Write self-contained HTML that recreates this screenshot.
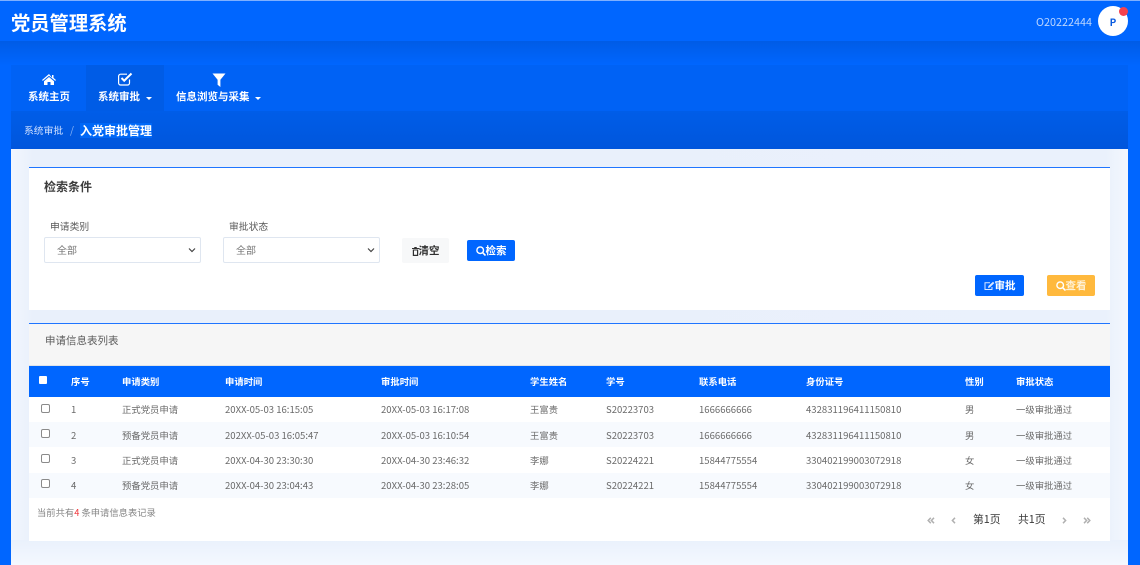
<!DOCTYPE html>
<html lang="zh-CN"><head><meta charset="utf-8"><title>党员管理系统</title>
<style>
*{box-sizing:border-box}
html{background:#0066ff}
html,body{margin:0;padding:0;width:1140px;height:565px;overflow:hidden;font-family:"Noto Sans CJK SC","Liberation Sans",sans-serif;color:#6c757d}
body{background:#0066ff;filter:blur(.3px)}
.a{position:absolute;white-space:nowrap}
.b{font-weight:700}
.t{font-size:9.35px;line-height:14px;color:#6a6a6a}
.n{font-size:9.55px}
.h{font-size:9.35px;line-height:14px;color:#fff;font-weight:700}
.btn{position:absolute;height:21px;border-radius:2px;font-size:10.5px;line-height:21px;font-weight:700;color:#fff;text-align:center}
.btn svg{vertical-align:-1.5px}
.cb{position:absolute;width:9px;height:9px;background:#fff;border:1px solid #8a8a8a;border-radius:2px}
.sel{position:absolute;top:237px;width:157px;height:26px;background:#fff;border:1px solid #dfe6f0;border-radius:2px;font-size:10px;line-height:24px;color:#777;padding-left:12px}
.sel svg{position:absolute;right:3px;top:9px}
</style></head><body>
<div class="a" style="left:0;top:0;width:1140px;height:1px;background:#7fb0ff"></div>
<div class="a" style="left:0;top:41px;width:1140px;height:24px;background:linear-gradient(#005ce6,#0066ff)"></div>
<div class="a b" style="left:11px;top:8px;font-size:19.3px;line-height:28px;color:#fff">党员管理系统</div>
<div class="a" style="left:1036px;top:15px;font-size:10.8px;line-height:14px;color:#bcd6ff">O20222444</div>
<div class="a" style="left:1098px;top:6px;width:30px;height:30px;border-radius:50%;background:#fff;color:#0a5be0;font-size:10px;font-weight:700;line-height:31px;text-align:center">P</div>
<div class="a" style="left:1118.500px;top:6.500px;width:9px;height:9px;border-radius:50%;background:#f5424d"></div>

<div class="a" style="left:11px;top:65px;width:1117px;height:46px;background:#0062f5"></div>
<div class="a" style="left:86px;top:65px;width:78px;height:46px;background:#005ce6"></div>
<svg class="a" style="left:42px;top:74px" width="14" height="11" viewBox="0 0 14 11"><path fill="#fff" d="M7 0 0 6l.8.9L7 1.800l6.200 5.100.8-.9-2.500-2.100V1H10v2.600zM7 3 2 7.200V11h3.500V8h3v3H12V7.200z"/></svg>
<svg class="a" style="left:118px;top:72px" width="15" height="14" viewBox="0 0 15 14"><path fill="none" stroke="#fff" stroke-width="1.200" d="M11.500 7.500v3.500a2 2 0 0 1-2 2H2.600a2 2 0 0 1-2-2V4.200a2 2 0 0 1 2-2H9"/><path fill="none" stroke="#fff" stroke-width="2" d="M3.500 6l2.700 2.700L13.500 1.500"/></svg>
<svg class="a" style="left:212px;top:73px" width="14" height="14" viewBox="0 0 14 14"><path fill="#fff" d="M.5.500h13L8.400 6.800V14L5.600 11.800V6.800z"/></svg>
<div class="a b" style="left:28px;top:90px;font-size:10.5px;line-height:14px;color:#fff">系统主页</div>
<div class="a b" style="left:98px;top:90px;font-size:10.5px;line-height:14px;color:#fff">系统审批</div>
<div class="a" style="left:146px;top:97px;border:3px solid transparent;border-top:3px solid #fff;border-bottom:0"></div>
<div class="a b" style="left:176px;top:90px;font-size:10.5px;line-height:14px;color:#fff">信息浏览与采集</div>
<div class="a" style="left:255px;top:97px;border:3px solid transparent;border-top:3px solid #fff;border-bottom:0"></div>

<div class="a" style="left:11px;top:111px;width:1117px;height:38px;background:linear-gradient(#005de8,#0056dc)"></div>
<div class="a" style="left:24px;top:123px;font-size:9.8px;line-height:14px;color:#cfe0ff">系统审批</div>
<div class="a" style="left:70px;top:123px;font-size:10px;line-height:14px;color:#8db6f5">/</div>
<div class="a" style="left:80px;top:123px;height:15px;background:#0068f7;font-size:12px;line-height:15px;font-weight:700;color:#fff">入党审批管理</div>

<div class="a" style="left:11px;top:149px;width:1117px;height:416px;background:linear-gradient(90deg,#f2f6fe,#e9f0fb 2%,#e9f0fb 50%,#eaf1fc 98%,#f3f7fe);"></div>
<div class="a" style="left:11px;top:540px;width:1117px;height:25px;background:linear-gradient(#eaf1fc,#f4f8ff)"></div>

<div class="a" style="left:29px;top:168px;width:1081px;height:142px;background:#fff"></div>
<div class="a" style="left:29px;top:167px;width:1081px;height:1px;background:#1f75ff"></div>
<div class="a b" style="left:44px;top:178px;font-size:12px;line-height:17px;color:#3c3c3c">检索条件</div>
<div class="a" style="left:50px;top:219px;font-size:9.8px;line-height:15px;color:#5a5a5a">申请类别</div>
<div class="a" style="left:229px;top:219px;font-size:9.8px;line-height:15px;color:#5a5a5a">审批状态</div>
<div class="sel" style="left:44px">全部<svg width="10" height="7" viewBox="0 0 10 7"><path d="M2 1.500l3 3 3-3" fill="none" stroke="#444" stroke-width="1.200"/></svg></div>
<div class="sel" style="left:223px">全部<svg width="10" height="7" viewBox="0 0 10 7"><path d="M2 1.500l3 3 3-3" fill="none" stroke="#444" stroke-width="1.200"/></svg></div>
<div class="btn" style="left:402px;top:238px;width:47px;height:25px;line-height:25px;background:#f7f8f9;color:#303030"><svg width="7" height="9" viewBox="0 0 7 9"><path fill="#303030" d="M0 1h2l.5-1h2L5 1h2v1H0zM.8 2.500h5.400V9H.8zm1.200 1v4.300h3V3.500z"/></svg>清空</div>
<div class="btn" style="left:467px;top:240px;width:48px;background:#0066ff"><svg width="10" height="10" viewBox="0 0 10 10"><circle cx="4.200" cy="4.200" r="3.300" fill="none" stroke="#fff" stroke-width="1.400"/><path d="M6.800 6.800 9.500 9.500" stroke="#fff" stroke-width="1.600"/></svg>检索</div>
<div class="btn" style="left:975px;top:275px;width:49px;background:#0066ff"><svg width="11" height="10" viewBox="0 0 11 10"><path fill="none" stroke="#dbe8ff" stroke-width="1" d="M8 6v2.500H1V1.800h5"/><path d="M4 7l.4-2L9 .8l1.300 1.300L5.800 6.500z" fill="#dbe8ff"/></svg>审批</div>
<div class="btn" style="left:1047px;top:275px;width:48px;background:#ffb93d;color:#fff1d6"><svg width="10" height="10" viewBox="0 0 10 10"><circle cx="4.200" cy="4.200" r="3.300" fill="none" stroke="#fff" stroke-width="1.400"/><path d="M6.800 6.800 9.500 9.500" stroke="#fff" stroke-width="1.600"/></svg>查看</div>

<div class="a" style="left:29px;top:324px;width:1081px;height:217px;background:#fff"></div>
<div class="a" style="left:29px;top:323px;width:1081px;height:1px;background:#1f75ff"></div>
<div class="a" style="left:29px;top:324px;width:1081px;height:42px;background:#f6f6f6;border-bottom:1px solid #dfe3e8"></div>
<div class="a" style="left:45px;top:333px;font-size:10.5px;line-height:15px;color:#5c5c5c">申请信息表列表</div>
<div class="a" style="left:29px;top:366px;width:1081px;height:31px;background:#0066ff"></div>
<div class="a" style="left:29px;top:422px;width:1081px;height:25px;background:#f7fafe"></div>
<div class="a" style="left:29px;top:473px;width:1081px;height:25px;background:#f7fafe"></div>

<div class="a" style="left:39px;top:376px;width:8px;height:8px;background:#fff;border-radius:1px"></div>
<div class="a h" style="left:71px;top:374px">序号</div>
<div class="a h" style="left:122px;top:374px">申请类别</div>
<div class="a h" style="left:225px;top:374px">申请时间</div>
<div class="a h" style="left:381px;top:374px">审批时间</div>
<div class="a h" style="left:530px;top:374px">学生姓名</div>
<div class="a h" style="left:606px;top:374px">学号</div>
<div class="a h" style="left:699px;top:374px">联系电话</div>
<div class="a h" style="left:806px;top:374px">身份证号</div>
<div class="a h" style="left:965px;top:374px">性别</div>
<div class="a h" style="left:1016px;top:374px">审批状态</div>

<div class="cb" style="left:41px;top:404px"></div>
<div class="a t n" style="left:71px;top:402px">1</div><div class="a t" style="left:122px;top:402px">正式党员申请</div><div class="a t n" style="left:225px;top:402px">20XX-05-03 16:15:05</div><div class="a t n" style="left:381px;top:402px">20XX-05-03 16:17:08</div><div class="a t" style="left:530px;top:402px">王富贵</div><div class="a t n" style="left:606px;top:402px">S20223703</div><div class="a t n" style="left:699px;top:402px">1666666666</div><div class="a t n" style="left:806px;top:402px">432831196411150810</div><div class="a t" style="left:965px;top:402px">男</div><div class="a t" style="left:1016px;top:402px">一级审批通过</div>

<div class="cb" style="left:41px;top:429px"></div>
<div class="a t n" style="left:71px;top:428px">2</div><div class="a t" style="left:122px;top:428px">预备党员申请</div><div class="a t n" style="left:225px;top:428px">202XX-05-03 16:05:47</div><div class="a t n" style="left:381px;top:428px">20XX-05-03 16:10:54</div><div class="a t" style="left:530px;top:428px">王富贵</div><div class="a t n" style="left:606px;top:428px">S20223703</div><div class="a t n" style="left:699px;top:428px">1666666666</div><div class="a t n" style="left:806px;top:428px">432831196411150810</div><div class="a t" style="left:965px;top:428px">男</div><div class="a t" style="left:1016px;top:428px">一级审批通过</div>

<div class="cb" style="left:41px;top:454px"></div>
<div class="a t n" style="left:71px;top:453px">3</div><div class="a t" style="left:122px;top:453px">正式党员申请</div><div class="a t n" style="left:225px;top:453px">20XX-04-30 23:30:30</div><div class="a t n" style="left:381px;top:453px">20XX-04-30 23:46:32</div><div class="a t" style="left:530px;top:453px">李娜</div><div class="a t n" style="left:606px;top:453px">S20224221</div><div class="a t n" style="left:699px;top:453px">15844775554</div><div class="a t n" style="left:806px;top:453px">330402199003072918</div><div class="a t" style="left:965px;top:453px">女</div><div class="a t" style="left:1016px;top:453px">一级审批通过</div>

<div class="cb" style="left:41px;top:479px"></div>
<div class="a t n" style="left:71px;top:478px">4</div><div class="a t" style="left:122px;top:478px">预备党员申请</div><div class="a t n" style="left:225px;top:478px">20XX-04-30 23:04:43</div><div class="a t n" style="left:381px;top:478px">20XX-04-30 23:28:05</div><div class="a t" style="left:530px;top:478px">李娜</div><div class="a t n" style="left:606px;top:478px">S20224221</div><div class="a t n" style="left:699px;top:478px">15844775554</div><div class="a t n" style="left:806px;top:478px">330402199003072918</div><div class="a t" style="left:965px;top:478px">女</div><div class="a t" style="left:1016px;top:478px">一级审批通过</div>

<div class="a" style="left:37px;top:505px;font-size:9.3px;line-height:14px;color:#858585">当前共有<span style="color:#f0353b">4</span> 条申请信息表记录</div>
<svg class="a" style="left:927px;top:517px" width="8" height="7" viewBox="0 0 8 7"><path d="M3.800 .8 1.200 3.500 3.800 6.200M7 .8 4.400 3.500 7 6.200" fill="none" stroke="#b0b0b0" stroke-width="1.500"/></svg>
<svg class="a" style="left:951px;top:517px" width="5" height="7" viewBox="0 0 5 7"><path d="M4 .8 1.400 3.500 4 6.200" fill="none" stroke="#b0b0b0" stroke-width="1.500"/></svg>
<div class="a" style="left:973px;top:511px;font-size:10.8px;line-height:16px;color:#3a3a3a">第1页</div>
<div class="a" style="left:1018px;top:511px;font-size:10.8px;line-height:16px;color:#3a3a3a">共1页</div>
<svg class="a" style="left:1062px;top:517px" width="5" height="7" viewBox="0 0 5 7"><path d="M1 .8 3.600 3.500 1 6.200" fill="none" stroke="#b0b0b0" stroke-width="1.500"/></svg>
<svg class="a" style="left:1083px;top:517px" width="8" height="7" viewBox="0 0 8 7"><path d="M1 .8 3.600 3.500 1 6.200M4.200 .8 6.800 3.500 4.200 6.200" fill="none" stroke="#b0b0b0" stroke-width="1.500"/></svg>
</body></html>
